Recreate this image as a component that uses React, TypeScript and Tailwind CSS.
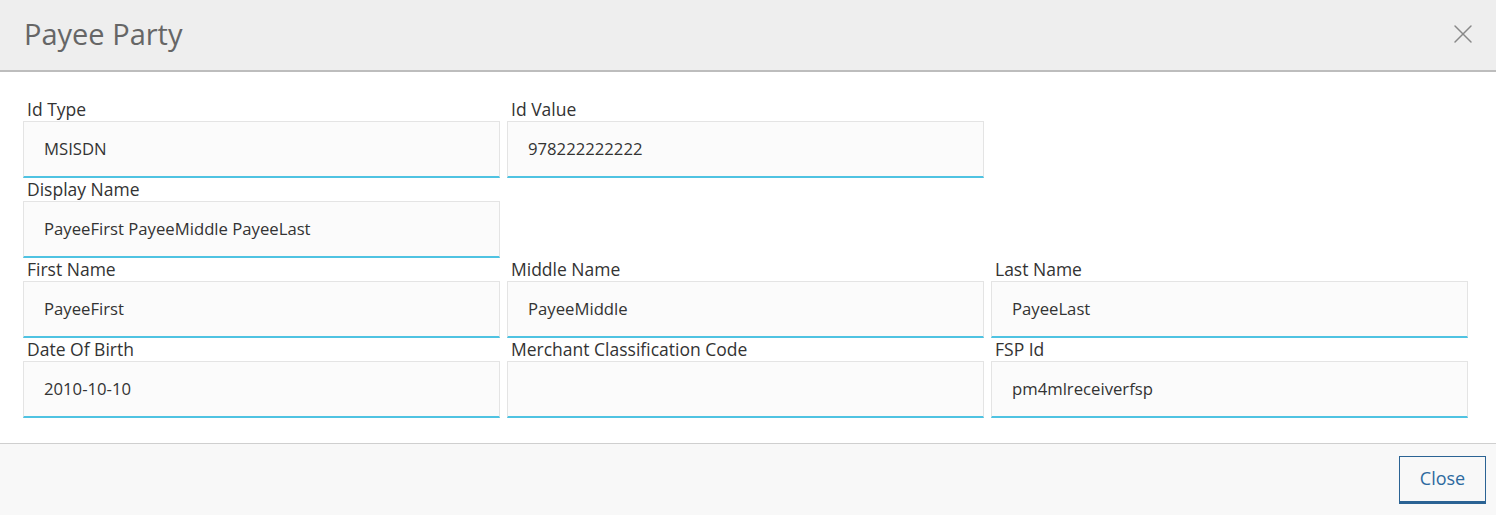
import { X } from 'lucide-react';

const rows = [
  [
    { label: 'Id Type', value: 'MSISDN' },
    { label: 'Id Value', value: '978222222222' },
  ],
  [{ label: 'Display Name', value: 'PayeeFirst PayeeMiddle PayeeLast' }],
  [
    { label: 'First Name', value: 'PayeeFirst' },
    { label: 'Middle Name', value: 'PayeeMiddle' },
    { label: 'Last Name', value: 'PayeeLast' },
  ],
  [
    { label: 'Date Of Birth', value: '2010-10-10' },
    { label: 'Merchant Classification Code', value: '' },
    { label: 'FSP Id', value: 'pm4mlreceiverfsp' },
  ],
];

function Field({ label, value }: { label: string; value: string }) {
  return (
    <div className="flex flex-col">
      <label className="h-[21px] pl-[4px] text-[17.5px] leading-[19px] text-[#333]">{label}</label>
      <div className="h-[57px] border border-[#e4e4e4] border-b-2 border-b-[#4fc3e2] bg-[#fbfbfb] pl-[20px] flex items-center text-[16.7px] text-[#333]">
        {value}
      </div>
    </div>
  );
}

export default function App() {
  return (
    <div className="w-[1496px] h-[515px] bg-white flex flex-col font-['Open_Sans',sans-serif]">
      {/* Header */}
      <div className="h-[72px] shrink-0 bg-[#eeeeee] border-b-2 border-[#bdbdbd] flex items-center justify-between pl-[24px] pr-[17px]">
        <h1 className="text-[29px] text-[#666] leading-none -mt-[4px]">Payee Party</h1>
        <X size={32} strokeWidth={1.1} className="text-[#888] -mt-[2px]" />
      </div>

      {/* Body */}
      <div className="flex-1 pt-[28px] pl-[23px]">
        <div className="flex flex-col gap-[2px]">
          {rows.map((row, i) => (
            <div key={i} className="grid grid-cols-[477px_477px_477px] gap-x-[7px]">
              {row.map((f) => (
                <Field key={f.label} label={f.label} value={f.value} />
              ))}
            </div>
          ))}
        </div>
      </div>

      {/* Footer */}
      <div className="h-[72px] shrink-0 bg-[#f8f8f8] border-t border-[#cfcfcf] flex items-center justify-end pr-[10px]">
        <button className="w-[87px] h-[48px] border border-[#2b6394] border-b-[3px] bg-[#f8f8f8] text-[18px] text-[#2d6a9f]">
          Close
        </button>
      </div>
    </div>
  );
}
